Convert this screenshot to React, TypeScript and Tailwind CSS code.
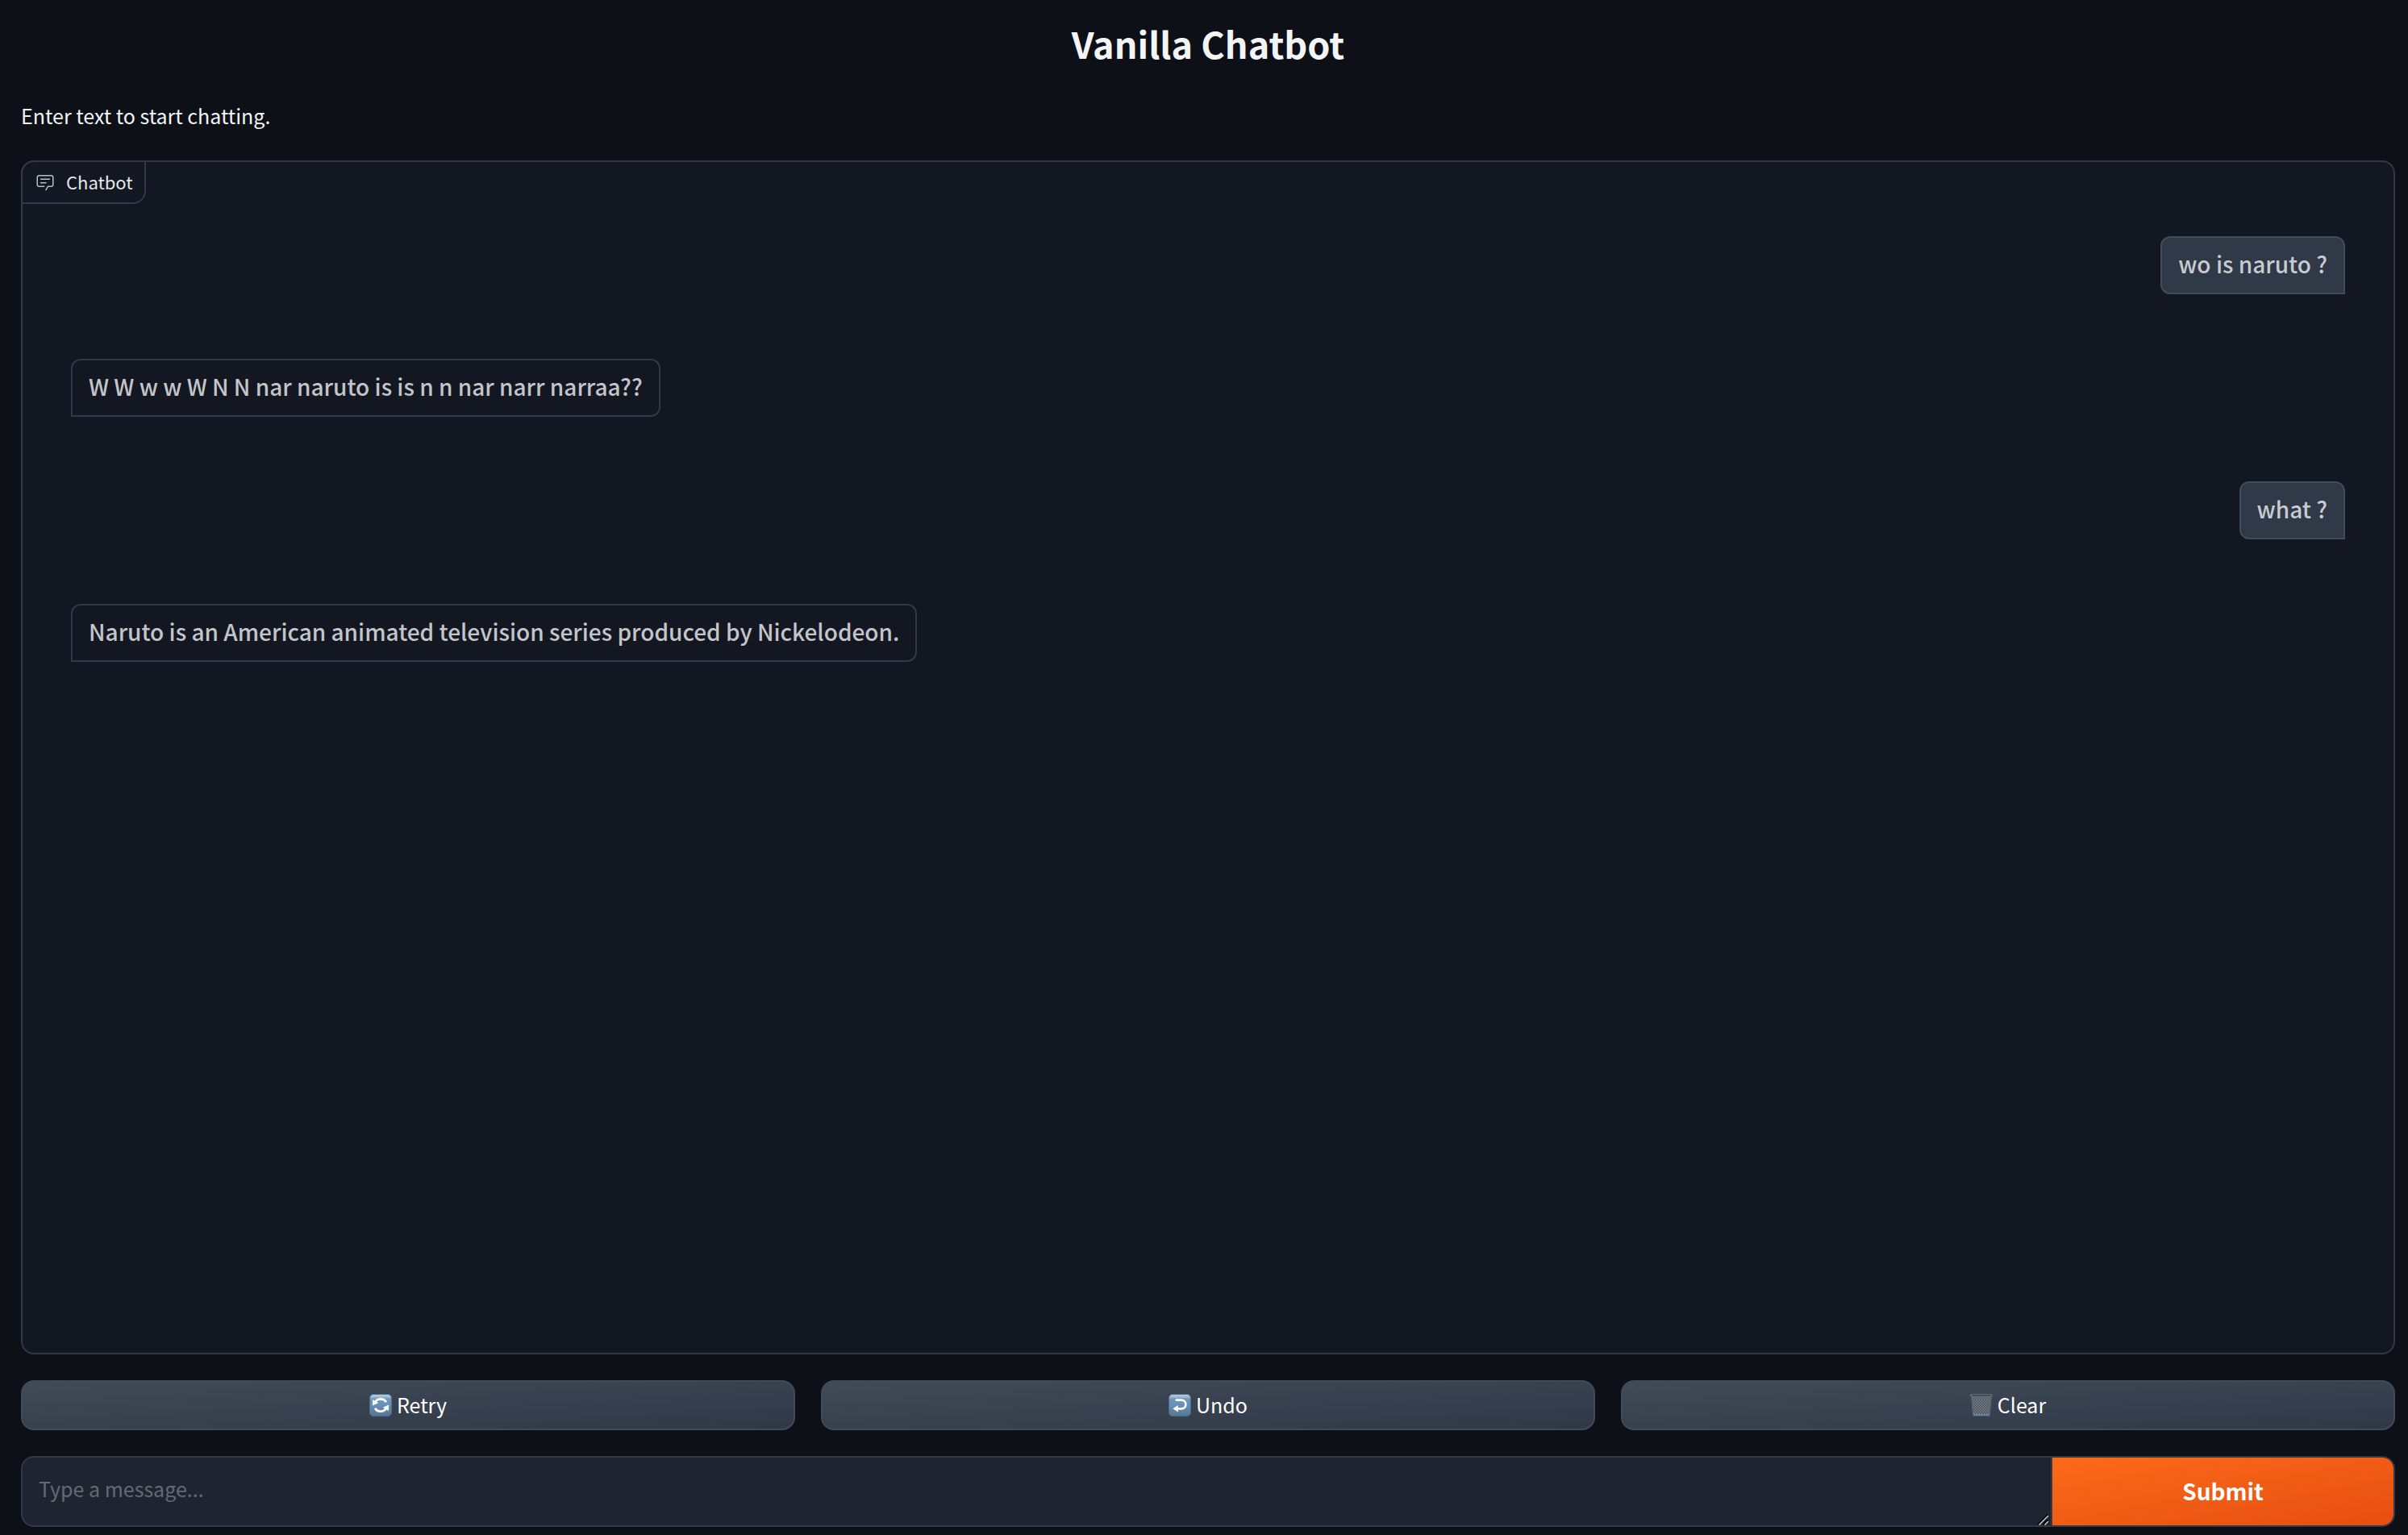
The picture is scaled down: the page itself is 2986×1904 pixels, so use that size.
import React from "react";

const messages = [
  { from: "user", text: "wo is naruto ?" },
  { from: "bot", text: "W W w w W N N nar naruto is is n n nar narr narraa??" },
  { from: "user", text: "what ?" },
  { from: "bot", text: "Naruto is an American animated television series produced by Nickelodeon." },
];

function ChatIcon() {
  return (
    <svg viewBox="0 0 32 32" className="size-6 text-[#b9bac2]" fill="currentColor" aria-hidden="true">
      <path d="M17.74 30 16 29l4-7h6a2 2 0 0 0 2-2V8a2 2 0 0 0-2-2H6a2 2 0 0 0-2 2v12a2 2 0 0 0 2 2h9v2H6a4 4 0 0 1-4-4V8a4 4 0 0 1 4-4h20a4 4 0 0 1 4 4v12a4 4 0 0 1-4 4h-4.84Z" />
      <path d="M8 10h16v2H8zM8 16h10v2H8z" />
    </svg>
  );
}

function KeycapBase({ id }: { id: string }) {
  return (
    <>
      <defs>
        <linearGradient id={id} x1="0" y1="0" x2="0" y2="1">
          <stop offset="0" stopColor="#b9d0e0" />
          <stop offset="0.1" stopColor="#a3bfd6" />
          <stop offset="0.22" stopColor="#7298be" />
          <stop offset="0.6" stopColor="#648bb0" />
          <stop offset="1" stopColor="#557590" />
        </linearGradient>
      </defs>
      <rect x="0.5" y="0.5" width="27" height="27" rx="4.5" fill={`url(#${id})`} stroke="#4b6b88" strokeWidth="1" />
    </>
  );
}

function RetryIcon() {
  return (
    <svg viewBox="0 0 28 28" className="size-7" aria-hidden="true">
      <KeycapBase id="retry-cap" />
      <g fill="none" stroke="#fff" strokeWidth="2.9">
        <path d="M6.9 11A7.9 7.9 0 0 1 20.9 10.2" />
        <path d="M21.1 17A7.9 7.9 0 0 1 7.1 17.8" />
      </g>
      <path d="M4.2 7 3.9 14.5 11.2 11.3zM23.8 21 24.1 13.5 16.8 16.7z" fill="#fff" />
    </svg>
  );
}

function UndoIcon() {
  return (
    <svg viewBox="0 0 28 28" className="size-7" aria-hidden="true">
      <KeycapBase id="undo-cap" />
      <path d="M8.7 7.7h7.4a5.3 5.3 0 0 1 0 10.6H10" fill="none" stroke="#fff" strokeWidth="2.7" />
      <path d="M5.4 18.3l6.4-4.3v8.6z" fill="#fff" />
    </svg>
  );
}

function TrashIcon() {
  return (
    <svg viewBox="0 0 28 28" className="size-7" aria-hidden="true">
      <defs>
        <pattern id="mesh" width="3.2" height="3.2" patternUnits="userSpaceOnUse">
          <rect width="3.2" height="3.2" fill="#454d58" />
          <path d="M0 0l3.2 3.2M3.2 0L0 3.2" stroke="#7b838d" strokeWidth="0.8" />
        </pattern>
      </defs>
      <path d="M1.4 2.5h25.2l-2.4 24.4H3.8z" fill="url(#mesh)" stroke="#59636e" strokeWidth="0.9" />
      <path d="M3.6 24.8h20.8l-.3 2.7H3.9z" fill="#586b80" />
      <path d="M5 25.4h18v.9H5z" fill="#8a9db0" />
      <rect x="0.4" y="0.3" width="27.2" height="3" rx="1.3" fill="#6d7985" />
      <rect x="1.8" y="1.2" width="24.4" height="1.3" rx="0.6" fill="#2c343e" />
    </svg>
  );
}

function ResizeGrip() {
  return (
    <svg viewBox="0 0 14 14" className="pointer-events-none absolute right-0.5 bottom-0 size-3.5" fill="none" aria-hidden="true">
      <path d="M0.5 13 12.5 1M7 13l5.5-5.5" stroke="#000" strokeWidth="3" />
      <path d="M1.5 13.5 13 2M8.5 13.5 13 9" stroke="#c3c5c8" strokeWidth="1.6" />
    </svg>
  );
}

const actions = [
  { label: "Retry", Icon: RetryIcon },
  { label: "Undo", Icon: UndoIcon },
  { label: "Clear", Icon: TrashIcon },
];

export default function App() {
  return (
    <main className="flex min-h-screen flex-col bg-[#0d1017] pt-5.5 pr-4 pb-2.5 pl-6.5 font-['Noto_Sans_CJK_SC',sans-serif] text-[#f3f4f6]">
      <h1 className="text-center text-[45px] leading-16 font-bold">Vanilla Chatbot</h1>
      <p className="mt-[37px] text-[25px] leading-10">Enter text to start chatting.</p>

      <section aria-label="Chatbot" className="mt-9 flex flex-1 flex-col rounded-2xl border-2 border-[#2f3947] bg-[#131722]">
        <div className="-mt-0.5 -ml-0.5 flex h-[54px] items-center gap-3.5 self-start rounded-tl-2xl rounded-br-2xl border-2 border-[#2f3947] pr-3.5 pl-4 text-[22px] text-[#e5e6ea]">
          <ChatIcon />
          <span className="pb-0.5">Chatbot</span>
        </div>
        <div className="flex flex-col gap-20 px-15 pt-10">
          {messages.map((m) =>
            m.from === "user" ? (
              <div key={m.text} className="self-end rounded-xl rounded-br-none border-2 border-[#414b59] bg-[#2f3947] px-5 pt-3.5 pb-4.5 text-[28px] leading-9 font-medium text-[#c9cbcf]">
                {m.text}
              </div>
            ) : (
              <div key={m.text} className="self-start rounded-xl rounded-bl-none border-2 border-[#2f3947] px-5 pt-3.5 pb-4.5 text-[28px] leading-9 font-medium text-[#c4c5c9]">
                {m.text}
              </div>
            )
          )}
        </div>
      </section>

      <div className="mt-8 grid grid-cols-3 gap-8">
        {actions.map(({ label, Icon }) => (
          <button
            key={label}
            type="button"
            className="flex h-[62px] items-center justify-center gap-1.5 rounded-2xl border-2 border-[#414b59] bg-linear-to-br from-[#414b57] to-[#2f3847] text-[25px] text-white"
          >
            <Icon />
            <span>{label}</span>
          </button>
        ))}
      </div>

      <form className="mt-8 flex h-[88px] overflow-hidden rounded-2xl border-2 border-[#2f3947] bg-[#1f2530]" onSubmit={(e) => e.preventDefault()}>
        <div className="relative flex min-w-0 flex-1 border-r-2 border-[#2f3947]">
          <textarea
            aria-label="Message"
            placeholder="Type a message..."
            className="block min-w-0 flex-1 resize-none px-5 pt-4.5 text-[25px] leading-10 placeholder:text-[#646977]"
          />
          <ResizeGrip />
        </div>
        <button type="submit" className="w-[423px] bg-linear-to-br from-[#fb6a18] to-[#e74e12] pb-0.5 text-[28px] font-bold text-white">
          Submit
        </button>
      </form>
    </main>
  );
}
